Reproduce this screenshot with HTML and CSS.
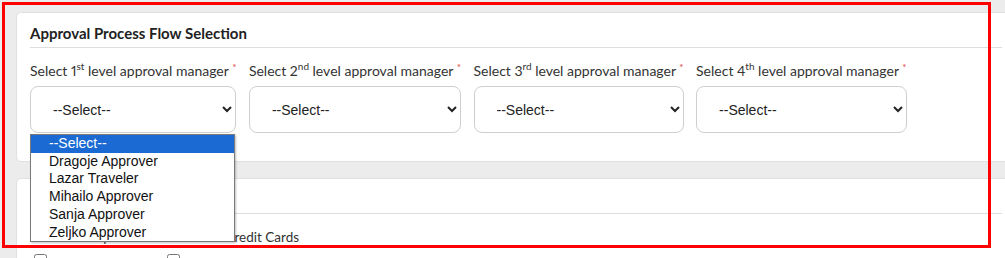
FILE: index.html
```html
<!DOCTYPE html>
<html>
<head>
	<title>Approval Process Flow Selection</title>
	<link rel="stylesheet" href="styles.css">
</head>
<body>
<div class="page">
    <div class="card">
        <h3 class="card-title">Approval Process Flow Selection</h3>
        <div class="levels">
            <div class="level">
                <label>Select 1<sup>st</sup> level approval manager <span class="req">*</span></label>
                <select><option>--Select--</option></select>
            </div>
            <div class="level">
                <label>Select 2<sup>nd</sup> level approval manager <span class="req">*</span></label>
                <select><option>--Select--</option></select>
            </div>
            <div class="level">
                <label>Select 3<sup>rd</sup> level approval manager <span class="req">*</span></label>
                <select><option>--Select--</option></select>
            </div>
            <div class="level">
                <label>Select 4<sup>th</sup> level approval manager <span class="req">*</span></label>
                <select><option>--Select--</option></select>
            </div>
        </div>

        <ul class="dropdown">
            <li class="active">--Select--</li>
            <li>Dragoje Approver</li>
            <li>Lazar Traveler</li>
            <li>Mihailo Approver</li>
            <li>Sanja Approver</li>
            <li>Zeljko Approver</li>
        </ul>
    </div>

    <div class="card">
        <h3 class="card-title">Payment Options</h3>
        <p class="row-label">Allowed Corporate and Business Credit Cards</p>
        <div class="checks">
            <label class="check"><input type="checkbox"> Visa Corporate</label>
            <label class="check"><input type="checkbox"> Mastercard</label>
        </div>
    </div>
</div>

<div class="highlight"></div>
</body>
</html>
```

FILE: styles.css
```css
* {
	margin: 0;
	padding: 0;
	box-sizing: border-box;
}

body {
	background-color: #ececec;
	font-family: "Lato", "Liberation Sans", sans-serif;
	font-size: 14px;
	color: #333;
	overflow: hidden;
	height: 258px;
}

.page {
	padding: 12px 0 0 16px;
}

.card {
	position: relative;
	background-color: #fff;
	border: 1px solid #e0e0e0;
	border-radius: 5px;
	margin-right: -12px;
	margin-bottom: 16px;
	padding: 9px 14px 28px 13px;
}

.card-title {
	font-size: 15px;
	font-weight: 700;
	line-height: 22px;
	color: #222;
	padding-bottom: 3px;
	border-bottom: 1px solid #dedede;
}

.levels {
	display: flex;
	gap: 12.5px;
	margin-top: 13px;
}

.level label {
	display: block;
	line-height: 20px;
	margin-bottom: 5px;
	white-space: nowrap;
	font-variant-numeric: proportional-nums;
}

.level sup {
	font-size: 10px;
	line-height: 0;
}

.req {
	color: #e8413c;
	font-size: 10px;
	vertical-align: 5px;
	line-height: 0;
}

.level select {
	display: block;
	width: 100%;
	height: 47px;
	padding: 0 8px 0 18px;
	border: 1px solid #cfcfcf;
	border-radius: 8px;
	background-color: #fff;
	font-family: "Liberation Sans", Arial, sans-serif;
	font-size: 14px;
	color: #222;
}

.dropdown {
	position: absolute;
	left: 13px;
	top: 121px;
	width: 205px;
	list-style: none;
	background-color: #fff;
	border: 1px solid #7a7a7a;
	box-shadow: 1px 1px 2px rgba(0, 0, 0, 0.25);
	z-index: 2;
	font-family: "Liberation Sans", Arial, sans-serif;
	font-size: 14px;
	color: #111;
}

.dropdown li {
	line-height: 17.7px;
	padding-left: 18px;
}

.dropdown li.active {
	background-color: #1b6ad3;
	color: #fff;
}

.row-label {
	font-size: 13.5px;
	line-height: 20px;
	margin-top: 13px;
	color: #333;
}

.checks {
	display: flex;
	margin-top: 4px;
}

.check {
	width: 133px;
	line-height: 40px;
}

.check input {
	vertical-align: top;
	margin: 3px 3px 3px 4px;
}

.highlight {
	position: absolute;
	left: 2px;
	top: 2px;
	width: 989px;
	height: 246px;
	border: 3px solid #ff0000;
	pointer-events: none;
	z-index: 5;
}
```
